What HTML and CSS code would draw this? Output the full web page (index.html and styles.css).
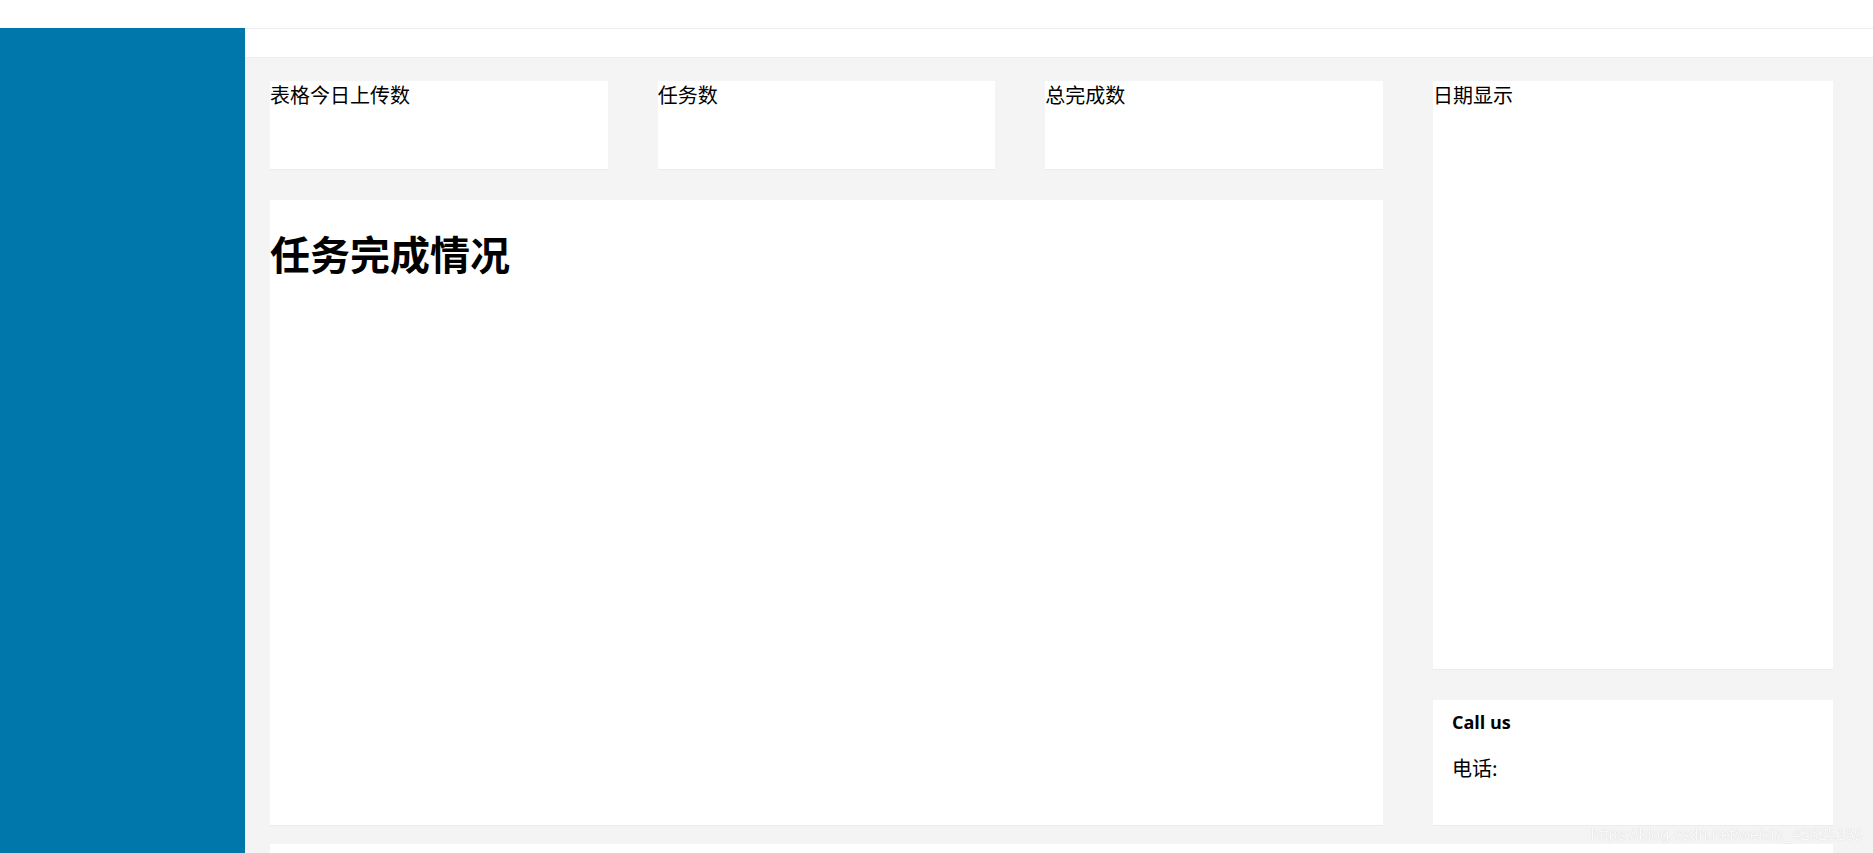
FILE: index.html
```html
<!DOCTYPE html>
<html lang="zh-CN">
<head>
    <meta charset="UTF-8">
    <title>任务管理</title>
    <link rel="stylesheet" href="styles.css">
</head>
<body>

<div class="topbar"></div>

<div class="layout">
    <div class="sidebar"></div>

    <div class="main">
        <div class="main-header"></div>

        <div class="content">
            <div class="left-col">
                <div class="stats">
                    <div class="card stat">表格今日上传数</div>
                    <div class="card stat">任务数</div>
                    <div class="card stat">总完成数</div>
                </div>
                <div class="card chart">
                    <h1>任务完成情况</h1>
                </div>
            </div>

            <div class="right-col">
                <div class="card date">日期显示</div>
                <div class="card contact">
                    <h4>Call us</h4>
                    <p>电话:</p>
                </div>
            </div>

            <div class="card bottom"></div>
        </div>
    </div>
</div>

<div class="watermark">https://blog.csdn.net/weixin_42625189</div>

</body>
</html>
```

FILE: styles.css
```css
body {
    margin: 0;
    font-family: "Noto Sans CJK SC", "Noto Sans", sans-serif;
    font-size: 20px;
    color: #000;
    background: #fff;
    overflow: hidden;
}
.topbar {
    height: 28px;
    background: #fff;
}
.layout {
    display: flex;
    min-height: calc(100vh - 28px);
}
.sidebar {
    width: 245px;
    flex-shrink: 0;
    background: #0077aa;
}
.main {
    flex: 1;
    display: flex;
    flex-direction: column;
    background: #f4f4f4;
}
.main-header {
    height: 28px;
    background: #fff;
    border-top: 1px solid #ececec;
    border-bottom: 1px solid #efefef;
}
.content {
    display: grid;
    grid-template-columns: 1fr 400px;
    column-gap: 50px;
    row-gap: 19px;
    padding: 23px 40px 0 25px;
}
.card {
    background: #fff;
    box-shadow: 0 1px 0 #ececec;
    line-height: 28px;
}
.left-col, .right-col {
    display: flex;
    flex-direction: column;
    gap: 31px;
}
.stats {
    display: grid;
    grid-template-columns: repeat(3, 1fr);
    gap: 50px;
}
.stat {
    height: 88px;
}
.chart {
    height: 625px;
}
.chart h1 {
    margin: 24px 0 0;
    font-size: 40px;
    line-height: normal;
    font-weight: bold;
}
.date {
    height: 588px;
}
.contact {
    height: 125px;
    box-sizing: border-box;
    padding: 10px 19px;
}
.contact h4 {
    margin: 0;
    font-family: "Open Sans", "Noto Sans", sans-serif;
    font-size: 18px;
    font-weight: bold;
    line-height: 24px;
}
.contact p {
    margin: 20px 0 0;
}
.bottom {
    grid-column: 1 / -1;
    height: 200px;
}
.watermark {
    position: fixed;
    right: 10px;
    bottom: 9px;
    font-family: "Liberation Sans", Arial, sans-serif;
    font-size: 16px;
    color: #fafafa;
    text-shadow: 0 0 1px #c4c4c4;
}
```
